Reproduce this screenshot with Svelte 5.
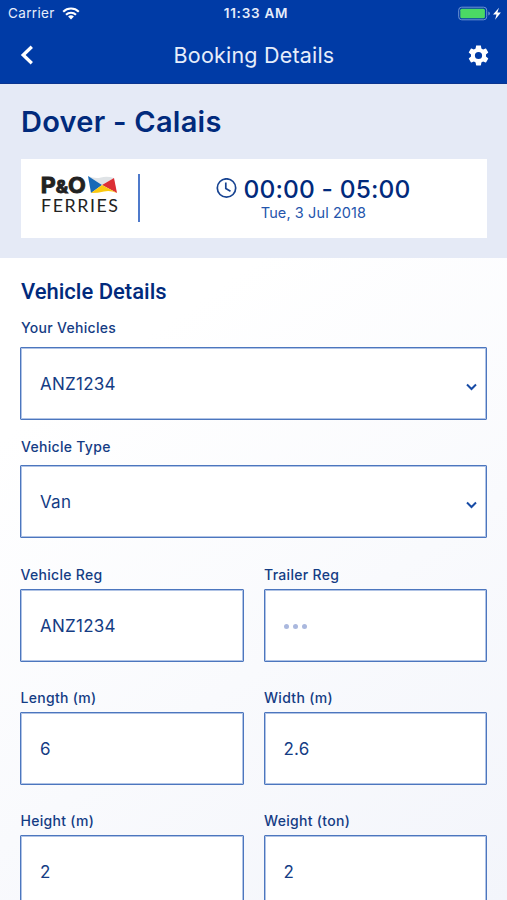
<script>
  let vehicles = ["ANZ1234"];
  let types = ["Van"];
  let vehicle = "ANZ1234";
  let type = "Van";

  let details = [
    { id: "reg", label: "Vehicle Reg", value: "ANZ1234" },
    { id: "trailer", label: "Trailer Reg", value: "" },
    { id: "length", label: "Length (m)", value: "6" },
    { id: "width", label: "Width (m)", value: "2.6" },
    { id: "height", label: "Height (m)", value: "2" },
    { id: "weight", label: "Weight (ton)", value: "2" }
  ];
</script>

<style>
  :global(body) {
    margin: 0;
  }
  * {
    box-sizing: border-box;
  }
  .screen {
    width: 507px;
    height: 900px;
    overflow: hidden;
    font-family: Inter, "Liberation Sans", sans-serif;
    color: #143c84;
    background: linear-gradient(145deg, #ffffff 35%, #f3f5fb 100%);
  }
  header {
    height: 84px;
    background: #003ba6;
    border-bottom: 1px solid #0a3590;
    color: #e6edfb;
  }
  .status {
    display: grid;
    grid-template-columns: 1fr auto 1fr;
    align-items: center;
    height: 27px;
    padding: 0 5px 0 8px;
    font-size: 13.5px;
    line-height: 27px;
  }
  .carrier {
    display: flex;
    align-items: center;
    gap: 7px;
    letter-spacing: 0.35px;
  }
  .time {
    padding-left: 2px;
    font-weight: 600;
    font-size: 13.5px;
    letter-spacing: 0.75px;
  }
  .battery {
    display: flex;
    justify-content: flex-end;
  }
  .nav {
    display: grid;
    grid-template-columns: 1fr auto 1fr;
    align-items: center;
    height: 56px;
    padding: 0 18px 0 20px;
  }
  .nav h1 {
    margin: 0 1px 1px 0;
    font-size: 21.5px;
    font-weight: 400;
    letter-spacing: 0.2px;
  }
  .nav button {
    display: flex;
    padding: 0;
    border: 0;
    background: none;
  }
  .nav .settings {
    justify-self: end;
  }
  .hero {
    height: 174px;
    padding: 18px 20px 0 21px;
    background: #e5eaf6;
  }
  .hero h2 {
    margin: 0;
    color: #012a7c;
    font-size: 29px;
    font-weight: 600;
    line-height: 39px;
    letter-spacing: 0.25px;
  }
  .trip {
    display: flex;
    align-items: center;
    height: 79px;
    margin-top: 18px;
    background: #fff;
  }
  .logo {
    display: block;
    align-self: flex-start;
    margin: 15px 0 0 19px;
    overflow: visible;
  }
  .brand {
    fill: #222;
    stroke: #222;
    stroke-width: 0.9px;
    font-family: Inter, sans-serif;
    font-size: 21.5px;
    font-weight: 700;
  }
  .ferries {
    fill: #222;
    font-family: Lato, sans-serif;
    font-size: 17.8px;
  }
  .divider {
    width: 2px;
    height: 48px;
    margin: 0 0 1px 19px;
    background: #4f7acb;
  }
  .schedule {
    flex: 1;
    display: flex;
    flex-direction: column;
    align-items: center;
  }
  .hours {
    display: flex;
    align-items: center;
    gap: 6px;
    color: #012a7c;
    font-size: 24.5px;
    font-weight: 500;
    line-height: 28px;
    letter-spacing: 0.15px;
  }
  .date {
    color: #2455ac;
    font-size: 14.5px;
    line-height: 20px;
    letter-spacing: 0.1px;
  }
  form {
    padding: 19px 20px 0;
  }
  h3 {
    margin: 0;
    padding-left: 1px;
    color: #012a7c;
    font-family: Roboto, Inter, sans-serif;
    font-size: 22px;
    font-weight: 500;
    line-height: 30px;
  }
  label {
    display: block;
    padding-left: 1px;
    font-size: 14px;
    font-weight: 500;
    line-height: 20px;
    letter-spacing: 0.3px;
  }
  input,
  select {
    display: block;
    width: 100%;
    height: 73px;
    margin: 0;
    padding: 0 19px;
    border: 1px solid #4c76be;
    border-radius: 1px;
    outline: none;
    box-shadow: inset 0 0 0 1px #b0c3e5;
    background: #fff;
    color: #143c84;
    font-family: inherit;
    font-size: 17px;
    letter-spacing: 0.25px;
    appearance: none;
  }
  .picker {
    padding-top: 11px;
  }
  .picker label {
    margin-bottom: 9px;
  }
  .picker + .picker {
    padding-top: 17px;
  }
  .picker + .picker label {
    margin-bottom: 8px;
  }
  .select {
    position: relative;
  }
  .select svg {
    position: absolute;
    top: 36px;
    right: 10px;
  }
  .grid {
    display: grid;
    grid-template-columns: 1fr 1fr;
    column-gap: 20px;
    row-gap: 26px;
    padding-top: 27px;
  }
  .grid label {
    margin-bottom: 5px;
    padding-left: 0.5px;
    line-height: 19px;
  }
  .cell {
    position: relative;
  }
  .dots {
    position: absolute;
    left: 20px;
    bottom: 33px;
    display: flex;
    gap: 4px;
  }
  .dots i {
    width: 5px;
    height: 5px;
    border-radius: 50%;
    background: #aab8de;
  }
</style>

<div class="screen">
  <header>
    <div class="status">
      <div class="carrier">
        <span>Carrier</span>
        <svg width="18" height="13" viewBox="0 0 18 13" fill="none" stroke="#fff" stroke-width="2.1">
          <path d="M1.2 4.7a11.2 11.2 0 0 1 15.6 0M4 7.8a7.2 7.2 0 0 1 10 0" />
          <path d="M9 12.5 6.1 9.6a4.2 4.2 0 0 1 5.8 0z" fill="#fff" stroke="none" />
        </svg>
      </div>
      <span class="time">11:33 AM</span>
      <div class="battery">
        <svg width="44" height="16" viewBox="0 0 44 16">
          <rect x="0.7" y="1.2" width="28" height="12.6" rx="3" fill="none" stroke="#6e93d2" />
          <rect x="2.3" y="2.8" width="24.6" height="9.4" rx="1.5" fill="#4bd964" />
          <path d="M30.3 5.5v4q1.6-.7 1.6-2t-1.6-2z" fill="#6e93d2" />
          <path d="M41 1.7 35 8.6h3.5l-1.4 5.2 5.8-7.2h-3.5z" fill="#fff" />
        </svg>
      </div>
    </div>
    <div class="nav">
      <button type="button" aria-label="Back">
        <svg width="14" height="20" viewBox="0 0 14 20" fill="none" stroke="#fff" stroke-width="3.3">
          <path d="M11.8 1.7 3.2 10l8.6 8.3" />
        </svg>
      </button>
      <h1>Booking Details</h1>
      <button type="button" class="settings" aria-label="Settings">
        <svg width="21" height="21" viewBox="1.5 1.5 21 21" fill="#fff">
          <path d="M19.43 12.98c.04-.32.07-.64.07-.98s-.03-.66-.07-.98l2.11-1.65c.19-.15.24-.42.12-.64l-2-3.46c-.12-.22-.39-.3-.61-.22l-2.49 1c-.52-.4-1.08-.73-1.69-.98l-.38-2.65C14.46 2.18 14.25 2 14 2h-4c-.25 0-.46.18-.49.42l-.38 2.65c-.61.25-1.17.59-1.69.98l-2.49-1c-.23-.09-.49 0-.61.22l-2 3.46c-.13.22-.07.49.12.64l2.11 1.65c-.04.32-.07.65-.07.98s.03.66.07.98l-2.11 1.65c-.19.15-.24.42-.12.64l2 3.46c.12.22.39.3.61.22l2.49-1c.52.4 1.08.73 1.69.98l.38 2.65c.03.24.24.42.49.42h4c.25 0 .46-.18.49-.42l.38-2.65c.61-.25 1.17-.59 1.69-.98l2.49 1c.23.09.49 0 .61-.22l2-3.46c.12-.22.07-.49-.12-.64l-2.11-1.65zM12 15.6a3.6 3.6 0 1 1 0-7.2a3.6 3.6 0 0 1 0 7.2z" />
        </svg>
      </button>
    </div>
  </header>

  <section class="hero">
    <h2>Dover - Calais</h2>
    <div class="trip">
      <svg class="logo" width="79" height="42" viewBox="0 0 79 42">
        <text class="brand" x="0.8" y="18.600" textLength="45" lengthAdjust="spacingAndGlyphs">P<tspan font-size="17">&amp;</tspan>O</text>
        <text class="ferries" x="1" y="37.500" textLength="77">FERRIES</text>
        <path d="M48 2q7 3 13 1.500t13 .5L62 11z" fill="#dfe3e6" />
        <path d="M48 2l14 9-11 8z" fill="#1769b7" />
        <path d="M74 4l3 15-15-8z" fill="#dc2f35" />
        <path d="M62 11l15 8q-7-3-13-1.500t-13 1.500z" fill="#fbc90f" />
      </svg>
      <div class="divider"></div>
      <div class="schedule">
        <div class="hours">
          <svg width="21" height="21" viewBox="0 0 21 21" fill="none" stroke="#174391" stroke-width="1.7">
            <circle cx="10.5" cy="10" r="9.2" />
            <path d="M9.8 4.5v6l4.7 2.7" />
          </svg>
          <span>00:00 - 05:00</span>
        </div>
        <span class="date">Tue, 3 Jul 2018</span>
      </div>
    </div>
  </section>

  <form>
    <h3>Vehicle Details</h3>
    <div class="picker">
      <label for="vehicle">Your Vehicles</label>
      <div class="select">
        <select id="vehicle" bind:value={vehicle}>
          {#each vehicles as option}
            <option value={option}>{option}</option>
          {/each}
        </select>
        <svg width="11" height="8" viewBox="0 0 11 8" fill="none" stroke="#174ba5" stroke-width="2">
          <path d="M1 1.5l4.5 4.5L10 1.5" />
        </svg>
      </div>
    </div>
    <div class="picker">
      <label for="type">Vehicle Type</label>
      <div class="select">
        <select id="type" bind:value={type}>
          {#each types as option}
            <option value={option}>{option}</option>
          {/each}
        </select>
        <svg width="11" height="8" viewBox="0 0 11 8" fill="none" stroke="#174ba5" stroke-width="2">
          <path d="M1 1.5l4.5 4.5L10 1.5" />
        </svg>
      </div>
    </div>
    <div class="grid">
      {#each details as field}
        <div class="cell">
          <label for={field.id}>{field.label}</label>
          <input id={field.id} type="text" bind:value={field.value} />
          {#if !field.value}
            <span class="dots"><i></i><i></i><i></i></span>
          {/if}
        </div>
      {/each}
    </div>
  </form>
</div>
